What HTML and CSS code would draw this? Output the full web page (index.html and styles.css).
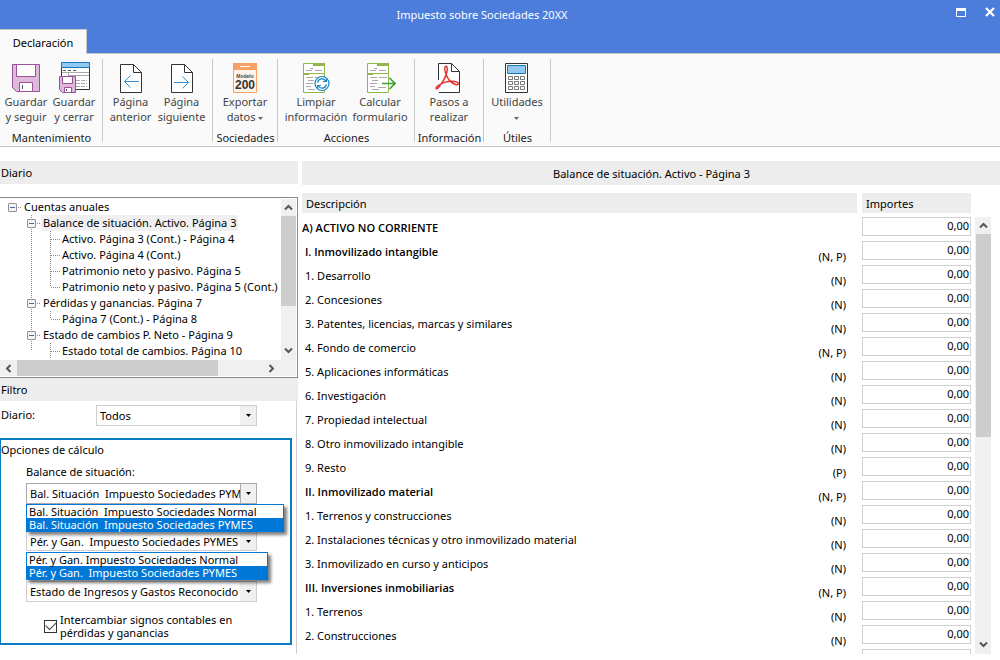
FILE: index.html
```html
<!DOCTYPE html>
<html lang="es">
<head>
<meta charset="utf-8">
<title>Impuesto sobre Sociedades 20XX</title>
<link rel="stylesheet" href="styles.css">
</head>
<body>
<div class="app">
  <header class="titlebar">
    <h1 class="title">Impuesto sobre Sociedades 20XX</h1>
    <div class="window-buttons">
      <button class="window-button" aria-label="Maximizar"><svg width="10" height="9"><path d="M.5 .5h9v8h-9z" fill="none" stroke="#fff"/><path d="M0 0h10v3H0z" fill="#fff"/></svg></button>
      <button class="window-button" aria-label="Cerrar"><svg width="10" height="10"><path d="M1 1l8 8M9 1L1 9" stroke="#fff" stroke-width="2.2"/></svg></button>
    </div>
    <div class="tabs"><button class="tab">Declaración</button></div>
  </header>

  <nav class="ribbon">
    <section class="group g-maint">
      <div class="tools">
        <button class="tool"><svg width="32" height="32" viewBox="0 0 32 32"><path d="M2.500 2.500h27v27H6.500l-4-4z" fill="#ddb9da" stroke="#9b4f9f"/><path d="M6.500 2.500h19v12h-19z" fill="#fff" stroke="#9b4f9f"/><path d="M9.500 20.500h13v9h-13z" fill="#fff" stroke="#9b4f9f"/><path d="M12.500 23v4" stroke="#555"/></svg><span>Guardar<br>y seguir</span></button>
        <button class="tool"><svg width="32" height="32" viewBox="0 0 32 32"><path d="M3.500 1.500h28v26h-28z" fill="#fff" stroke="#333"/><path d="M3.500 .5h28v5h-28z" fill="#91c9f0" stroke="#1976b8"/><path d="M5 8.500h3m2 0h3m2 0h3" stroke="#555"/><path d="M4 10.500h27M10.500 10v6M11 13.500h20" stroke="#aaa"/><path d="M18 18.500h11m-11 3h11m-11 3h11" stroke="#aaa" stroke-dasharray="4 1"/><path d="M1.500 14.500h16v16H4.500l-3-3z" fill="#ddb9da" stroke="#9b4f9f"/><path d="M4.500 14.500h10v7h-10zM6.500 25.500h7v5h-7z" fill="#fff" stroke="#9b4f9f"/><path d="M8.500 27v2" stroke="#555"/></svg><span>Guardar<br>y cerrar</span></button>
      </div>
      <h2 class="group-name">Mantenimiento</h2>
    </section>
    <section class="group g-page">
      <div class="tools">
        <button class="tool"><svg width="32" height="32" viewBox="0 0 32 32"><path d="M5.500 2.500h13l8 8v20h-21z" fill="#fff" stroke="#333"/><path d="M18.500 2.500v8h8" fill="none" stroke="#333"/><path d="M24 19.500H9.500M15.500 13.500l-6 6 6 6" fill="none" stroke="#2b8fd0"/></svg><span>Página<br>anterior</span></button>
        <button class="tool"><svg width="32" height="32" viewBox="0 0 32 32"><path d="M5.500 2.500h13l8 8v20h-21z" fill="#fff" stroke="#333"/><path d="M18.500 2.500v8h8" fill="none" stroke="#333"/><path d="M8 20.500h14.500M16.500 14.500l6 6-6 6" fill="none" stroke="#2b8fd0"/></svg><span>Página<br>siguiente</span></button>
      </div>
    </section>
    <section class="group g-export">
      <div class="tools">
        <button class="tool"><svg width="32" height="32" viewBox="0 0 32 32"><path d="M4.500 1.500h23v29h-23z" fill="#fff4ec" stroke="#f9a066"/><path d="M4 1h24v7H4z" fill="#f9a066"/><path d="M11 4.500h10" stroke="#fff"/><text x="16" y="16" class="icon-label">Modelo</text><text x="16" y="27" class="icon-number">200</text></svg><span>Exportar<br>datos <svg class="caret" width="5" height="3"><path d="M0 0h5L2.500 3z"/></svg></span></button>
      </div>
      <h2 class="group-name">Sociedades</h2>
    </section>
    <section class="group g-actions">
      <div class="tools">
        <button class="tool"><svg width="32" height="32" viewBox="0 0 32 32"><path d="M3.500 1.500h21v29h-21zM3.500 11.500h21" fill="#fff" stroke="#91b74c"/><path d="M13 1h12v3H13zM3 11h6v2H3z" fill="#91b74c"/><path d="M6 8.500h6M15 8.500h7M10 6.500h3M6 15.500h7M8 18.500h6M6 21.500h7M6 24.500h5M8 27.500h7M15 15.500h8" stroke="#aaa"/><circle cx="22" cy="21.500" r="7" fill="#fff" stroke="#1686c5" stroke-width="1.200"/><path d="M17.500 20.500c1-4 6-5 8-1.500m1-3v3.500H23M26.500 22.500c-1 4-6 5-8 1.500m-1 3v-3.500H21" fill="none" stroke="#1686c5" stroke-width="1.200"/></svg><span>Limpiar<br>información</span></button>
        <button class="tool"><svg width="32" height="32" viewBox="0 0 32 32"><path d="M3.500 1.500h21v29h-21zM3.500 11.500h21" fill="#fff" stroke="#91b74c"/><path d="M13 1h12v3H13zM3 11h6v2H3z" fill="#91b74c"/><path d="M6 8.500h6M15 8.500h7M10 6.500h3M6 15.500h7M15 15.500h8M8 18.500h6M6 21.500h7M6 24.500h5M8 27.500h7M14 25.500h8" stroke="#aaa"/><path d="M18 21.500h13M25.500 16l5.500 5.500-5.500 5.500" fill="none" stroke="#3f9f2f" stroke-width="1.600"/></svg><span>Calcular<br>formulario</span></button>
      </div>
      <h2 class="group-name">Acciones</h2>
    </section>
    <section class="group g-info">
      <div class="tools">
        <button class="tool"><svg width="32" height="32" viewBox="0 0 32 32"><path d="M5.500 18v-16.500h13l8 8v21H6" fill="#fff" stroke="#333"/><path d="M18.500 1.500v8h8" fill="none" stroke="#333"/><path d="M12 5c1.500-2 3 0 2 4.500C12.500 16 8.500 22 5.500 25.500 3.500 28 2 26.500 4 24.500c4-4 12-6 18-5 4.500.8 4 4 .5 3-4-1.200-8-5.500-10-11.500C12 9 11.300 6.500 12 5z" fill="none" stroke="#e5302f" stroke-width="1.400"/></svg><span>Pasos a<br>realizar</span></button>
      </div>
      <h2 class="group-name">Información</h2>
    </section>
    <section class="group g-utils">
      <div class="tools">
        <button class="tool"><svg width="32" height="32" viewBox="0 0 32 32"><path d="M4.500 1.500h22v29h-22z" fill="#fff" stroke="#333"/><path d="M6.500 3.500h18v8h-18z" fill="#91c9f0" stroke="#1976b8"/><path d="M7.500 14.500h4v3h-4zM13.500 14.500h4v3h-4zM19.500 14.500h4v3h-4zM7.500 19.500h4v3h-4zM13.500 19.500h4v3h-4zM19.500 19.500h4v3h-4zM7.500 24.500h4v3h-4zM13.500 24.500h4v3h-4zM19.500 24.500h4v3h-4z" fill="#fff" stroke="#777"/></svg><span>Utilidades<br><svg class="caret" width="5" height="3"><path d="M0 0h5L2.500 3z"/></svg></span></button>
      </div>
      <h2 class="group-name">Útiles</h2>
    </section>
  </nav>

  <main class="workspace">
    <aside class="sidebar">
      <h2 class="bar">Diario</h2>
      <div class="tree-box">
        <ul class="tree" role="tree">
          <li><span class="node"><i class="toggle"></i><span class="label">Cuentas anuales</span></span>
            <ul>
              <li><span class="node"><i class="toggle"></i><span class="label selected">Balance de situación. Activo. Página 3</span></span>
                <ul>
                  <li><span class="node leaf">Activo. Página 3 (Cont.) - Página 4</span></li>
                  <li><span class="node leaf">Activo. Página 4 (Cont.)</span></li>
                  <li><span class="node leaf">Patrimonio neto y pasivo. Página 5</span></li>
                  <li><span class="node leaf">Patrimonio neto y pasivo. Página 5 (Cont.)</span></li>
                </ul></li>
              <li><span class="node"><i class="toggle"></i><span class="label">Pérdidas y ganancias. Página 7</span></span>
                <ul><li><span class="node leaf">Página 7 (Cont.) - Página 8</span></li></ul></li>
              <li><span class="node"><i class="toggle"></i><span class="label">Estado de cambios P. Neto - Página 9</span></span>
                <ul class="more"><li><span class="node leaf">Estado total de cambios. Página 10</span></li></ul></li>
            </ul></li>
        </ul>
        <div class="vscroll"><svg width="9" height="7"><path d="M1 5.500L4.500 2 8 5.500"/></svg><span class="thumb tree-thumb"></span><svg class="end" width="9" height="7"><path d="M1 1.500L4.500 5 8 1.500"/></svg></div>
        <div class="hscroll"><svg width="7" height="9"><path d="M5.500 1L2 4.500 5.500 8"/></svg><span class="hthumb"></span><svg class="end" width="7" height="9"><path d="M1.500 1L5 4.500 1.500 8"/></svg></div>
      </div>
      <h2 class="bar filter-bar">Filtro</h2>
      <div class="filter">
        <div class="filter-row">
          <label for="diario">Diario:</label>
          <div class="combo"><select id="diario"><option>Todos</option></select><span class="arrow"><svg width="5" height="3"><path d="M0 0h5L2.500 3z"/></svg></span></div>
        </div>
        <fieldset class="options">
          <legend>Opciones de cálculo</legend>
          <label for="balance">Balance de situación:</label>
          <div class="combo open">
            <select id="balance"><option>Bal. Situación&nbsp; Impuesto Sociedades PYM</option><option>Bal. Situación&nbsp; Impuesto Sociedades Normal</option></select><span class="arrow"><svg width="5" height="3"><path d="M0 0h5L2.500 3z"/></svg></span>
            <ul class="menu menu-wide"><li>Bal. Situación&nbsp; Impuesto Sociedades Normal</li><li class="active">Bal. Situación&nbsp; Impuesto Sociedades PYMES</li></ul>
          </div>
          <div class="combo second">
            <select aria-label="Pérdidas y ganancias"><option>Pér. y Gan.&nbsp; Impuesto Sociedades PYMES</option><option>Pér. y Gan. Impuesto Sociedades Normal</option></select><span class="arrow"><svg width="5" height="3"><path d="M0 0h5L2.500 3z"/></svg></span>
            <ul class="menu"><li>Pér. y Gan. Impuesto Sociedades Normal</li><li class="active">Pér. y Gan.&nbsp; Impuesto Sociedades PYMES</li></ul>
          </div>
          <div class="combo third">
            <select aria-label="Estado de ingresos y gastos"><option>Estado de Ingresos y Gastos Reconocido</option></select><span class="arrow"><svg width="5" height="3"><path d="M0 0h5L2.500 3z"/></svg></span>
          </div>
          <label class="check"><input type="checkbox" checked><span>Intercambiar signos contables en pérdidas y ganancias</span></label>
        </fieldset>
      </div>
    </aside>

    <section class="content">
      <h2 class="bar page-bar">Balance de situación. Activo - Página 3</h2>
      <div class="sheet">
        <table class="grid">
          <thead><tr><th colspan="2">Descripción</th><th class="gap"></th><th>Importes</th></tr></thead>
          <tbody>
            <tr><td class="total">A) ACTIVO NO CORRIENTE</td><td class="note"></td><td></td><td><input value="0,00" aria-label="Activo no corriente"></td></tr>
            <tr><td class="sub">I. Inmovilizado intangible</td><td class="note">(N, P)</td><td></td><td><input value="0,00" aria-label="Inmovilizado intangible"></td></tr>
            <tr><td>1. Desarrollo</td><td class="note">(N)</td><td></td><td><input value="0,00" aria-label="Desarrollo"></td></tr>
            <tr><td>2. Concesiones</td><td class="note">(N)</td><td></td><td><input value="0,00" aria-label="Concesiones"></td></tr>
            <tr><td>3. Patentes, licencias, marcas y similares</td><td class="note">(N)</td><td></td><td><input value="0,00" aria-label="Patentes, licencias, marcas y similares"></td></tr>
            <tr><td>4. Fondo de comercio</td><td class="note">(N, P)</td><td></td><td><input value="0,00" aria-label="Fondo de comercio"></td></tr>
            <tr><td>5. Aplicaciones informáticas</td><td class="note">(N)</td><td></td><td><input value="0,00" aria-label="Aplicaciones informáticas"></td></tr>
            <tr><td>6. Investigación</td><td class="note">(N)</td><td></td><td><input value="0,00" aria-label="Investigación"></td></tr>
            <tr><td>7. Propiedad intelectual</td><td class="note">(N)</td><td></td><td><input value="0,00" aria-label="Propiedad intelectual"></td></tr>
            <tr><td>8. Otro inmovilizado intangible</td><td class="note">(N)</td><td></td><td><input value="0,00" aria-label="Otro inmovilizado intangible"></td></tr>
            <tr><td>9. Resto</td><td class="note">(P)</td><td></td><td><input value="0,00" aria-label="Resto"></td></tr>
            <tr><td class="sub">II. Inmovilizado material</td><td class="note">(N, P)</td><td></td><td><input value="0,00" aria-label="Inmovilizado material"></td></tr>
            <tr><td>1. Terrenos y construcciones</td><td class="note">(N)</td><td></td><td><input value="0,00" aria-label="Terrenos y construcciones"></td></tr>
            <tr><td>2. Instalaciones técnicas y otro inmovilizado material</td><td class="note">(N)</td><td></td><td><input value="0,00" aria-label="Instalaciones técnicas"></td></tr>
            <tr><td>3. Inmovilizado en curso y anticipos</td><td class="note">(N)</td><td></td><td><input value="0,00" aria-label="Inmovilizado en curso y anticipos"></td></tr>
            <tr><td class="sub">III. Inversiones inmobiliarias</td><td class="note">(N, P)</td><td></td><td><input value="0,00" aria-label="Inversiones inmobiliarias"></td></tr>
            <tr><td>1. Terrenos</td><td class="note">(N)</td><td></td><td><input value="0,00" aria-label="Terrenos"></td></tr>
            <tr><td>2. Construcciones</td><td class="note">(N)</td><td></td><td><input value="0,00" aria-label="Construcciones"></td></tr>
            <tr><td></td><td></td><td></td><td><input aria-label="Fila siguiente"></td></tr>
          </tbody>
        </table>
        <div class="vscroll sheet-scroll"><svg width="9" height="7"><path d="M1 5.500L4.500 2 8 5.500"/></svg><span class="thumb sheet-thumb"></span><svg class="end" width="9" height="7"><path d="M1 1.500L4.500 5 8 1.500"/></svg></div>
      </div>
    </section>
  </main>
</div>
</body>
</html>
```
FILE: styles.css
```css
* { box-sizing: border-box; }
body, h1, h2, ul, fieldset { margin: 0; padding: 0; }
body, button, input, select { font-family: "Noto Sans", "Open Sans", sans-serif; font-size: 11px; color: #000; }
h1, h2 { font-size: 11px; font-weight: 400; }
ul { list-style: none; }
button { border: 0; background: none; padding: 0; }
svg { display: block; }

.app { height: 100vh; display: flex; flex-direction: column; background: #fff; overflow: hidden; padding-bottom: 6px; }

.titlebar { background: #4d7ddb; height: 53px; flex: none; display: grid; grid-template-columns: 1fr auto; grid-template-rows: 29px 25px; }
.title { grid-column: 1; color: #fff; line-height: 30px; text-align: center; padding-left: 8px; }
.window-buttons { display: flex; gap: 19px; padding: 7px 5px 0 0; align-items: flex-start; }
.window-button { height: 10px; }
.tabs { grid-column: 1 / 3; display: flex; z-index: 1; }
.tab { width: 87px; background: #fafafa; border: 1px solid #c8c8c8; border-width: 1px 1px 0 0; }

.ribbon { flex: none; display: flex; height: 94px; padding: 5px 0 4px; background: #fafafa; border-top: 1px solid #c8c8c8; border-bottom: 1px solid #c8c8c8; }
.group { display: flex; flex-direction: column; justify-content: space-between; border-right: 1px solid #c8c8c8; }
.g-maint { width: 103px; }
.g-page { width: 110px; }
.g-export { width: 65px; }
.g-actions { width: 137px; }
.g-info { width: 69px; }
.g-utils { width: 67px; }
.tools { display: flex; justify-content: center; padding-top: 3px; }
.tool { display: flex; flex-direction: column; align-items: center; color: #444; line-height: 15px; white-space: nowrap; }
.g-maint .tools { padding-right: 2px; }
.g-maint .tool { width: 48px; }
.g-page .tools { padding-right: 3px; }
.g-page .tool { width: 51px; }
.g-actions .tools { padding-left: 4px; }
.g-actions .tool { width: 64px; }
.caret { display: inline-block; fill: #666; vertical-align: middle; }
.icon-label { font: 700 5px "Liberation Sans", sans-serif; text-anchor: middle; fill: #444; }
.icon-number { font: 700 12px "Liberation Sans", sans-serif; text-anchor: middle; fill: #333; }
.group-name { text-align: center; line-height: 8px; color: #222; white-space: nowrap; padding-left: 1px; }

.workspace { flex: 1; min-height: 0; display: flex; gap: 4px; padding-top: 14px; }
.bar { background: #ededed; height: 23px; line-height: 23px; padding-left: 1px; flex: none; }

.sidebar { width: 298px; flex: none; display: flex; flex-direction: column; }
.tree-box { margin-top: 13px; height: 181px; border: 1px solid #8a8594; border-left: 0; display: grid; grid-template-columns: 1fr 15px; grid-template-rows: 1fr 16px; padding: 1px; padding-left: 0; flex: none; }
.tree { padding: 0 0 0 8px; overflow: hidden; white-space: nowrap; line-height: 16px; }
.tree ul { padding-left: 19px; background: repeating-linear-gradient(#888 0 1px, transparent 1px 2px) 23px 0 / 1px calc(100% - 8px) no-repeat; }
.tree ul.more { background-size: 1px 100%; }
.node { display: flex; align-items: center; height: 16px; }
.toggle { width: 9px; height: 9px; border: 1px solid #919191; border-radius: 1px; background: linear-gradient(#4b63a7, #4b63a7) center / 5px 1px no-repeat, #f4f4f4; }
.toggle::after { content: ""; display: block; width: 3px; margin: 3px 0 0 9px; border-top: 1px dotted #888; }
.node > .toggle { margin-right: 5px; }
.label { padding: 0 2px; }
.node .label { line-height: 16px; }
.selected { background: #f0f0f0; }
.leaf::before { content: ""; width: 9px; margin: 0 2px 0 5px; border-top: 1px dotted #888; }

.vscroll { background: #f0f0f0; display: flex; flex-direction: column; align-items: center; padding-top: 5px; }
.vscroll svg, .hscroll svg { fill: none; stroke: #555; stroke-width: 2; flex: none; }
.thumb { width: 15px; background: #cdcdcd; margin-top: 5px; }
.tree-thumb { height: 90px; }
.end { margin-top: auto; }
.vscroll .end { margin-bottom: 6px; }
.hscroll { grid-column: 1 / 3; background: #f0f0f0; display: flex; align-items: center; padding: 0 21px 0 5px; }
.hthumb { width: 201px; height: 16px; background: #cdcdcd; margin-left: 5px; }
.hscroll .end { margin-left: auto; margin-top: 0; }

.filter { flex: 1; min-height: 0; border-right: 1px solid #d0d0d0; margin-right: 1px; padding-top: 4px; }
.filter-row { display: flex; padding-left: 1px; }
.filter-row label { width: 95px; line-height: 20px; }
.combo { position: relative; width: 161px; height: 21px; display: flex; border: 1px solid #cfcfcf; background: #fff; }
.combo select { flex: 1; min-width: 0; appearance: none; border: 0; background: none; padding: 0 0 0 3px; outline: 0; overflow: hidden; text-overflow: clip; white-space: nowrap; }
.arrow { width: 16px; background: #f0f0f0; display: flex; align-items: center; justify-content: center; }
.arrow svg { fill: #000; }
.options { margin: 12px 4px 0 0; height: 207px; border: 2px solid #0a7cc4; border-left-width: 1px; padding: 3px 0 0 25px; min-width: 0; }
.options legend { float: left; width: 100%; margin-left: -25px; padding: 0; line-height: 14px; }
.options > label:first-of-type { display: block; clear: both; padding: 6px 0 2px; line-height: 18px; }
.options .combo { width: 231px; }
.options .open { border-color: #aaa; }
.options .second { margin-top: 27px; height: 20px; }
.options .third { margin-top: 30px; height: 21px; }
.open .arrow { border-left: 1px solid #aaa; }
.menu { position: absolute; top: 20px; left: -1px; z-index: 2; width: 242px; background: #fff; border: 1px solid #0078d7; line-height: 13px; white-space: nowrap; box-shadow: 3px 3px 3px rgba(0,0,0,.5); }
.menu-wide { width: 258px; }
.menu li { padding-left: 2px; }
.menu .active { background: #0078d7; color: #fff; }
.check { display: flex; align-items: center; gap: 3px; line-height: 13px; padding: 11px 45px 0 18px; }
.check input { appearance: none; width: 13px; height: 13px; margin: 0; border: 1px solid #333; flex: none; display: grid; place-items: center; }
.check input:checked::before { content: ""; width: 9px; height: 5px; border: solid #444; border-width: 0 0 1px 1px; transform: rotate(-45deg) translate(1px, -1px); }

.content { flex: 1; min-width: 0; display: flex; flex-direction: column; }
.page-bar { height: 24px; line-height: 26px; text-align: center; }
.sheet { flex: 1; min-height: 0; overflow: hidden; display: flex; gap: 4px; padding: 8px 9px 0 0; }
.grid { flex: 1; border-collapse: collapse; table-layout: auto; width: 100%; align-self: flex-start; }
.grid th { background: #ededed; height: 20px; line-height: 18px; padding: 2px 4px 0; font-weight: 400; text-align: left; }
.grid th:last-child { width: 109px; }
.grid th.gap { width: 5px; padding: 0; background: none; }
.grid td { height: 24px; padding: 0 0 0 3px; line-height: 24px; vertical-align: top; }
.grid tbody::before { content: ""; display: block; height: 3px; }
.grid .total, .grid .sub { font-family: "Open Sans", sans-serif; font-weight: 600; }
.grid .total { padding-left: 0; }
.grid td.note { padding: 9px 11px 0 0; line-height: 15px; width: 50px; text-align: right; white-space: nowrap; }
.grid td:last-child { padding: 1px 0 0; }
.grid input { display: block; width: 109px; height: 19px; border: 1px solid #cfcfcf; padding: 0 1px 2px; text-align: right; outline: 0; }
.sheet-scroll { width: 16px; flex: none; margin-top: 24px; }
.sheet-thumb { height: 203px; }
```
